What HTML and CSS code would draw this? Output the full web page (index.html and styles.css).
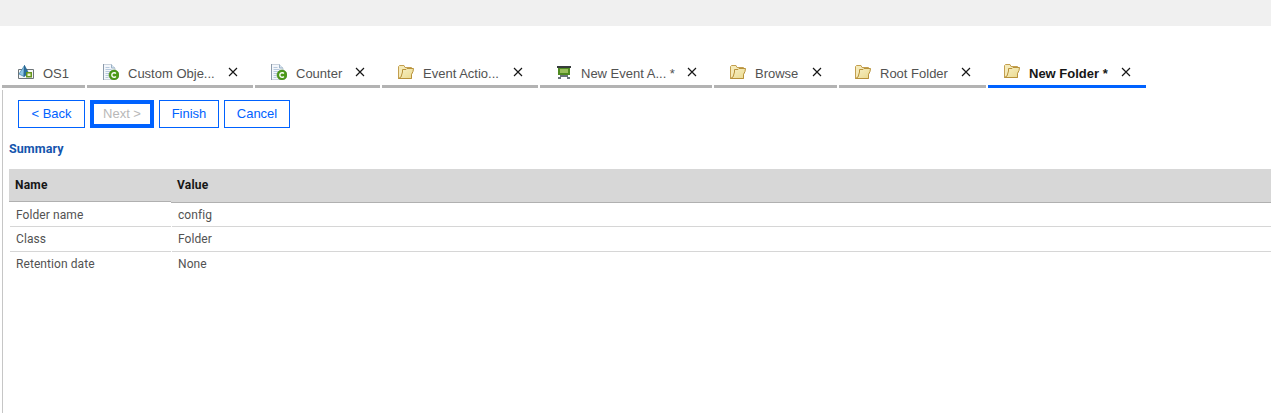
FILE: index.html
```
<!DOCTYPE html>
<html lang="en">
<head>
<meta charset="utf-8">
<title>New Folder</title>
<link rel="stylesheet" href="styles.css">
</head>
<body>
<svg class="defs" width="0" height="0" aria-hidden="true">
  <defs>
    <linearGradient id="paper" x2="1" y2="1"><stop stop-color="#f8f1c8"/><stop offset="1" stop-color="#ead98e"/></linearGradient>
    <symbol id="folder" viewBox="0 0 16 16">
      <path d="M.5 13.500V1.500l1-1h4.500l1 2h6.500v11z" fill="#f5eab8" stroke="#c39f50"/>
      <path d="M.5 13.500 3 12l1.500-5V4.500H8l1-1h6.500l-.5 3-1.500 3v4z" fill="url(#paper)" stroke="#b8923b"/>
    </symbol>
    <symbol id="document" viewBox="0 0 16 16">
      <path d="M.5.5h8l3.500 3.500v11.500H.5z" fill="#f4f7fb" stroke="#cbd3dd"/>
      <path d="M.5 0v16" stroke="#8b9aaa"/>
      <path d="M8.500.5V4H12" fill="#d8e5f1" stroke="#9bb1c5"/>
      <path d="M2.500 3.500h4m-4 2h6m-6 2h6m-6 2h4m-4 2h3m-3 2h3" stroke="#b7c9dd"/>
      <circle cx="11" cy="11" r="5" fill="#4c9a18" stroke="#3b7d13" stroke-width=".6"/>
      <path d="M12.900 9.500a2.300 2.300 0 1 0 0 3" fill="none" stroke="#fff" stroke-width="1.400"/>
    </symbol>
    <symbol id="board" viewBox="0 0 16 16">
      <path d="M1 1h14v2H1z" fill="#363b3b"/>
      <path d="M2 3h12v7H2z" fill="#4f8a20"/>
      <path d="M4 4h8v4H4z" fill="#98bf5b"/>
      <path d="M4 10h8v2h2v2h-3v-2H5v2H2v-2h2z" fill="#69747a"/>
    </symbol>
    <symbol id="store" viewBox="0 0 16 16">
      <path d="M.5 4.500h15v9H.5z" fill="#f5f6f7" stroke="#6d7478"/>
      <path d="M6.500.5 1 9l5 2.500z" fill="#8fc5e5" stroke="#3d83ad" stroke-width=".7"/>
      <path d="m6.500.5 4 7.500L6 11.500z" fill="#286f9f" stroke="#205c86" stroke-width=".7"/>
      <path d="M8.750 7.750h4.500v4h-4.500z" fill="#eef4d0" stroke="#65951c" stroke-width="1.500"/>
    </symbol>
    <symbol id="close" viewBox="0 0 10 10"><path d="m1 1 8 8m0-8L1 9" stroke="#161616" stroke-width="1.150"/></symbol>
  </defs>
</svg>
<header class="banner"></header>
<nav class="tabs">
  <div class="tab tab-os"><svg class="icon"><use href="#store"/></svg><span class="label">OS1</span></div>
  <div class="tab tab-custom"><svg class="icon"><use href="#document"/></svg><span class="label">Custom Obje...</span><svg class="close"><use href="#close"/></svg></div>
  <div class="tab tab-counter"><svg class="icon"><use href="#document"/></svg><span class="label">Counter</span><svg class="close"><use href="#close"/></svg></div>
  <div class="tab tab-event"><svg class="icon"><use href="#folder"/></svg><span class="label">Event Actio...</span><svg class="close"><use href="#close"/></svg></div>
  <div class="tab tab-new-event"><svg class="icon"><use href="#board"/></svg><span class="label">New Event A... *</span><svg class="close"><use href="#close"/></svg></div>
  <div class="tab tab-browse"><svg class="icon"><use href="#folder"/></svg><span class="label">Browse</span><svg class="close"><use href="#close"/></svg></div>
  <div class="tab tab-root"><svg class="icon"><use href="#folder"/></svg><span class="label">Root Folder</span><svg class="close"><use href="#close"/></svg></div>
  <div class="tab tab-folder active"><svg class="icon"><use href="#folder"/></svg><span class="label">New Folder *</span><svg class="close"><use href="#close"/></svg></div>
</nav>
<main class="panel">
  <div class="actions">
    <button class="button back">&lt; Back</button>
    <button class="button next">Next &gt;</button>
    <button class="button finish">Finish</button>
    <button class="button cancel">Cancel</button>
  </div>
  <h1 class="title">Summary</h1>
  <div class="head"><div class="name">Name</div><div class="value">Value</div></div>
  <div class="row"><div class="name">Folder name</div><div class="value">config</div></div>
  <div class="row second"><div class="name">Class</div><div class="value">Folder</div></div>
  <div class="row last"><div class="name">Retention date</div><div class="value">None</div></div>
</main>
</body>
</html>
```
FILE: styles.css
```
* { box-sizing: border-box; }
body { margin: 0; height: 413px; overflow: hidden; background: #fff; font-family: "Liberation Sans", Arial, sans-serif; color: #525252; }
.defs { display: block; }
.banner { height: 26px; background: #f0f0f0; }
.tabs { display: flex; gap: 2px; height: 64px; padding: 32px 0 2px 2px; }
.tab { display: flex; flex: none; align-items: flex-start; height: 30px; padding: 0 15px 0 16px; border-bottom: 3px solid #b3b3b3; font-size: 13px; line-height: 15px; white-space: nowrap; }
.tab-os { width: 83px; }
.tab-custom { width: 166px; }
.tab-counter { width: 125px; }
.tab-event { width: 156px; }
.tab-new-event { width: 172px; }
.tab-browse { width: 123px; }
.tab-root { width: 147px; }
.tab-folder { width: 158px; }
.icon { flex: none; width: 16px; height: 16px; margin-top: 7px; }
.tab-custom .icon, .tab-counter .icon { margin-top: 6px; }
.label { margin: 8px 0 0 9px; }
.close { flex: none; width: 10px; height: 10px; margin: 9px 0 0 auto; }
.active { border-color: #0062ff; font-weight: 700; color: #161616; }
.active .icon { margin-top: 6px; }
.panel { height: 323px; margin-left: 2px; padding: 10px 0 0 6px; border-left: 1px solid #c6c6c6; }
.actions { display: flex; gap: 5px; height: 28px; padding-left: 9px; }
.button { height: 28px; padding: 0 0 2px; border: 1px solid #0062ff; background: #fff; color: #0062ff; font: 13px/15px "Liberation Sans", Arial, sans-serif; }
.back { width: 67px; }
.next { width: 64px; border-width: 4px; color: #b8b8b8; }
.finish { width: 60px; }
.cancel { width: 66px; }
.title { height: 15px; margin: 13px 0; font: 700 12.500px/15px Roboto, sans-serif; letter-spacing: .08px; color: #1455ad; }
.head, .row { display: grid; grid-template-columns: 162px 1fr; font: 12px/16px Roboto, sans-serif; }
.head { height: 34px; font-weight: 700; letter-spacing: .2px; color: #161616; }
.head > div { height: 34px; padding: 8px 6px; border-bottom: 1px solid #b0b0b0; background: #d7d7d7; }
.head .name { height: 33px; }
.row { height: 24px; grid-template-columns: 161px 1fr; gap: 1px; padding-left: 1px; letter-spacing: .08px; }
.row > div { padding: 4px 6px 0; border-bottom: 1px solid #d6d6d6; }
.second { height: 25px; }
.last > div { border: 0; }
```
